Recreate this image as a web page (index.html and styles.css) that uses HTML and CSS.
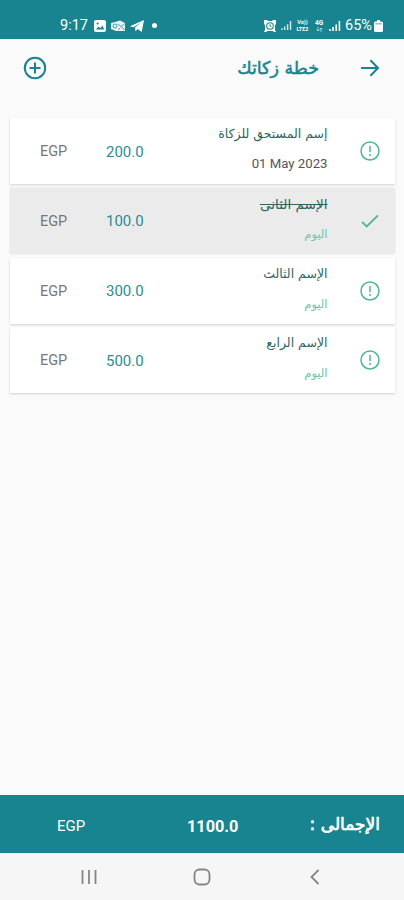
FILE: index.html
```
<!DOCTYPE html>
<html lang="ar">
<head>
<meta charset="utf-8">
<title>خطة زكاتك</title>
<link rel="stylesheet" href="styles.css">
</head>
<body>
<svg class="defs" width="0" height="0" aria-hidden="true">
  <symbol id="alert" viewBox="0 0 20 20"><circle cx="10" cy="10" r="9" fill="none" stroke="currentColor" stroke-width="1.5"/><path d="M10 5v6.200M10 13v1.900" fill="none" stroke="currentColor" stroke-width="1.500"/></symbol>
  <symbol id="check" viewBox="0 0 20 20"><path d="M2 10.800l4.700 4.600L18 4.300" fill="none" stroke="currentColor" stroke-width="1.800"/></symbol>
  <symbol id="signal" viewBox="0 0 12 12"><path d="M1 9v2M4 7v4M7.200 4.500V11M10.400 1v10" fill="none" stroke="currentColor" stroke-width="1.600"/></symbol>
</svg>
<div class="status">
  <div class="status-left">
    <span class="time">9:17</span>
    <svg class="ic-photo" width="12" height="12" viewBox="0 0 12 12"><rect width="12" height="12" rx="2" fill="#fff"/><path d="M2 9.500l2.500-3 1.800 1.800L8.500 5.500 10.200 9.500z" fill="#17848f"/><circle cx="3.600" cy="3.500" r="1.100" fill="#17848f"/></svg>
    <svg class="ic-mail" width="14" height="12" viewBox="0 0 14 12"><path d="M4 2l5-1.500L14 3v8H5L0 9V3z" fill="#fff" opacity=".9"/><circle cx="4" cy="6" r="2" fill="none" stroke="#17848f" stroke-width=".8"/><path d="M7 4l3 2.500L13.500 4M7 10l2.500-2.500M13.500 10L11 7" fill="none" stroke="#17848f" stroke-width=".7"/></svg>
    <svg class="ic-send" width="14" height="12" viewBox="0 0 14 12"><path d="M0 6.200L14 0l-2.300 12-4-3-2.200 2.300-.5-3.800L11 2.500 3.500 7.300z" fill="#fff"/></svg>
    <i class="dot"></i>
  </div>
  <div class="status-right">
    <svg class="ic-alarm" width="12" height="12" viewBox="0 0 12 12"><path d="M0 0h3l1 1h4l1-1h3v4l-1 1v5l1 2H9.500L9 11H3l-.5 1H0l1-2V5L0 4z" fill="#fff"/><circle cx="6" cy="6" r="3.300" fill="none" stroke="#17848f" stroke-width="1.100"/><path d="M6 4.200V6l1.400.8" fill="none" stroke="#17848f"/></svg>
    <svg class="ic-sim1" width="11" height="11"><use href="#signal"/></svg>
    <span class="tiny volte"><b>Vo))</b><b>LTE2</b></span>
    <span class="tiny fourg"><b>4G</b><svg width="7" height="5" viewBox="0 0 7 5"><path d="M2 0v4M.5 2.500L2 4l1.500-1.500M5 5V1M3.700 2.500L5 1l1.300 1.500" fill="none" stroke="#fff" stroke-width=".8" opacity=".7"/></svg></span>
    <svg class="ic-sim2" width="12" height="12"><use href="#signal"/></svg>
    <span class="percent">65%</span>
    <svg class="ic-battery" width="9" height="12" viewBox="0 0 9 12"><path d="M3 0h3v1.500h1.500Q9 1.500 9 3v7.500Q9 12 7.500 12h-6Q0 12 0 10.500V3q0-1.500 1.500-1.500H3z" fill="#fff"/><path d="M1.300 3h6.400v1.500H1.300z" fill="#17848f" opacity=".5"/></svg>
  </div>
</div>
<header class="bar">
  <svg class="add" width="24" height="24" viewBox="0 0 24 24"><circle cx="12" cy="12" r="10.200"/><path d="M12 6.500v11M6.500 12h11"/></svg>
  <h1 dir="rtl">خطة زكاتك</h1>
  <svg class="arrow" width="20" height="18" viewBox="0 0 20 18"><path d="M1 9h17M10.500 1.200L18 9l-7.500 7.800"/></svg>
</header>
<main class="list">
  <article class="card">
    <span class="cur">EGP</span><span class="amt">200.0</span>
    <div class="who" dir="rtl"><span class="name">إسم المستحق للزكاة</span><span class="date" dir="ltr">01 May 2023</span></div>
    <svg class="state" width="20" height="20"><use href="#alert"/></svg>
  </article>
  <article class="card done">
    <span class="cur">EGP</span><span class="amt">100.0</span>
    <div class="who" dir="rtl"><span class="name">الإسم الثانى</span><span class="today">اليوم</span></div>
    <svg class="state" width="20" height="20"><use href="#check"/></svg>
  </article>
  <article class="card">
    <span class="cur">EGP</span><span class="amt">300.0</span>
    <div class="who" dir="rtl"><span class="name">الإسم الثالث</span><span class="today">اليوم</span></div>
    <svg class="state" width="20" height="20"><use href="#alert"/></svg>
  </article>
  <article class="card">
    <span class="cur">EGP</span><span class="amt">500.0</span>
    <div class="who" dir="rtl"><span class="name">الإسم الرابع</span><span class="today">اليوم</span></div>
    <svg class="state" width="20" height="20"><use href="#alert"/></svg>
  </article>
</main>
<footer class="total">
  <span class="total-cur">EGP</span>
  <span class="total-amt">1100.0</span>
  <span class="total-label" dir="rtl">الإجمالى :</span>
</footer>
<nav class="keys">
  <svg width="18" height="18" viewBox="0 0 18 18"><path d="M2.500 2v14M9 2v14M15.500 2v14"/></svg>
  <svg width="18" height="18" viewBox="0 0 18 18"><rect x="1.500" y="1.500" width="15" height="15" rx="5"/></svg>
  <svg width="18" height="18" viewBox="0 0 18 18"><path d="M12.500 2L5.500 9l7 7"/></svg>
</nav>
</body>
</html>
```
FILE: styles.css
```
* { box-sizing: border-box; }
body {
  margin: 0;
  height: 900px;
  display: flex;
  flex-direction: column;
  background: #fafafa;
  font-family: Roboto, "DejaVu Sans", sans-serif;
  overflow: hidden;
}
svg { display: block; flex: none; }
.defs { position: absolute; }
.status {
  height: 39px;
  padding: 12px 21px 0 60px;
  display: flex;
  justify-content: space-between;
  background: #17848f;
  color: #fff;
}
.status-left, .status-right { display: flex; align-items: center; height: 27px; }
.time { width: 34px; font-size: 14.500px; }
.ic-mail { margin-left: 5px; }
.ic-send { margin-left: 5px; }
.dot { width: 5px; height: 5px; margin-left: 8px; border-radius: 50%; background: #fff; }
.ic-sim1 { margin-left: 5px; opacity: .8; }
.tiny { display: flex; flex-direction: column; align-items: center; font-size: 5.500px; line-height: 7px; }
.volte { width: 15px; margin-left: 3px; }
.fourg { width: 10px; margin-left: 4px; }
.fourg b { font-size: 6.500px; }
.ic-sim2 { margin-left: 5px; }
.percent { margin-left: 4px; width: 29px; font-size: 14.500px; white-space: nowrap; }
.bar {
  height: 58px;
  padding: 0 24px 0 23px;
  display: flex;
  align-items: center;
  color: #17848f;
}
.bar svg { fill: none; stroke: currentColor; stroke-width: 2; }
.bar h1 {
  flex: 1;
  margin: 0 41px 0 0;
  font: 400 17.500px/24px "DejaVu Sans", sans-serif;
  -webkit-text-stroke: .5px currentColor;
}
.list {
  flex: 1;
  padding: 21px 9px 0 10px;
  display: flex;
  flex-direction: column;
  gap: 3.800px;
}
.card {
  height: 66px;
  display: grid;
  grid-template-columns: 66px 77px 174.500px 1fr;
  background: #fff;
  box-shadow: 0 1px 2px rgba(0, 0, 0, .16);
}
.card.done { background: #ebebeb; box-shadow: 0 0 2px rgba(0, 0, 0, .1); }
.cur, .amt { align-self: center; line-height: 20px; }
.cur { padding: 2px 0 0 30px; font-size: 14.500px; color: #777; }
.amt { padding: 1px 0 0 30px; color: #2b8d93; font-size: 15px; }
.who { display: flex; flex-direction: column; align-items: flex-start; padding-top: 6px; white-space: nowrap; }
.name { font: 12.500px/20px "DejaVu Sans", sans-serif; color: #2d6560; }
.done .name { font-size: 13.600px; text-decoration: line-through; }
.date { margin-top: 10px; font-size: 13.200px; line-height: 20px; color: #555; }
.today { margin-top: 10px; font: 11.500px/20px "DejaVu Sans", sans-serif; color: #6bc5a9; }
.state { margin: 23px 0 0 32.500px; color: #4db795; }
.total {
  height: 58px;
  display: grid;
  grid-template-columns: 187px 80px 1fr;
  align-items: center;
  background: #17848f;
  color: #fff;
}
.total-cur { padding: 4px 0 0 57px; font-size: 15px; }
.total-amt { padding-top: 4px; font-size: 16.300px; font-weight: 700; }
.total-label {
  padding-right: 24px;
  font: 400 17px/24px "DejaVu Sans", sans-serif;
  -webkit-text-stroke: .7px currentColor;
}
.keys {
  height: 47px;
  padding: 0 80px;
  display: flex;
  align-items: center;
  justify-content: space-between;
  background: #f6f6f6;
}
.keys svg { fill: none; stroke: #858585; stroke-width: 1.800; }
```
